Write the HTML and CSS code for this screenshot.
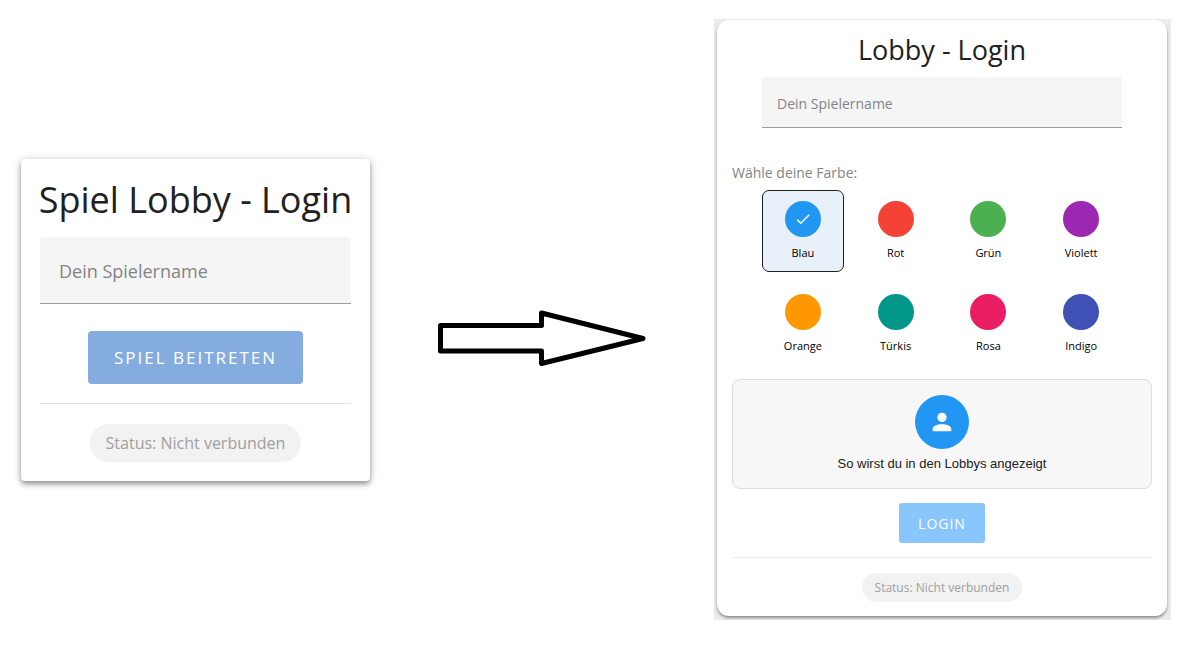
FILE: index.html
```html
<!DOCTYPE html>
<html lang="de">
<head>
    <meta charset="UTF-8">
    <meta name="viewport" content="width=device-width, initial-scale=1.0">
    <title>Lobby - Login</title>
    <link rel="stylesheet" href="styles.css">
</head>
<body>
    <main class="comparison">

        <!-- Old login -->
        <form class="card card-old">
            <h1 class="title">Spiel Lobby - Login</h1>
            <input type="text" class="name-field" placeholder="Dein Spielername" aria-label="Dein Spielername">
            <button type="button" class="btn">SPIEL BEITRETEN</button>
            <div class="status-row">
                <span class="chip">Status: Nicht verbunden</span>
            </div>
        </form>

        <!-- Arrow -->
        <svg class="arrow" viewBox="0 0 208 56" aria-hidden="true">
            <path d="M2.5 15.5H103.5V3L205 28.5L103.5 53.5V41H2.5Z" fill="#fff" stroke="#000" stroke-width="5" stroke-linejoin="round"/>
        </svg>

        <!-- New login -->
        <div class="backdrop">
            <form class="card card-new">
                <h1 class="title">Lobby - Login</h1>
                <input type="text" class="name-field" placeholder="Dein Spielername" aria-label="Dein Spielername">

                <fieldset class="colors">
                    <legend>Wähle deine Farbe:</legend>
                    <div class="color-grid">
                        <label class="color">
                            <input type="radio" name="color" checked>
                            <span class="dot blue">
                                <svg viewBox="0 0 24 24" width="18" height="18" aria-hidden="true"><path d="M21 7L9 19L3.5 13.5L4.91 12.09L9 16.17L19.59 5.59Z" fill="#fff"/></svg>
                            </span>
                            Blau
                        </label>
                        <label class="color"><input type="radio" name="color"><span class="dot red"></span>Rot</label>
                        <label class="color"><input type="radio" name="color"><span class="dot green"></span>Grün</label>
                        <label class="color"><input type="radio" name="color"><span class="dot violet"></span>Violett</label>
                        <label class="color"><input type="radio" name="color"><span class="dot orange"></span>Orange</label>
                        <label class="color"><input type="radio" name="color"><span class="dot teal"></span>Türkis</label>
                        <label class="color"><input type="radio" name="color"><span class="dot pink"></span>Rosa</label>
                        <label class="color"><input type="radio" name="color"><span class="dot indigo"></span>Indigo</label>
                    </div>
                </fieldset>

                <div class="preview">
                    <div class="avatar blue">
                        <svg viewBox="0 0 24 24" width="28" height="28" aria-hidden="true"><path d="M12 4a4 4 0 1 1 0 8a4 4 0 0 1 0-8M12 14c4.42 0 8 1.79 8 4v2H4v-2c0-2.21 3.58-4 8-4" fill="#fff"/></svg>
                    </div>
                    <p>So wirst du in den Lobbys angezeigt</p>
                </div>

                <button type="button" class="btn">LOGIN</button>
                <div class="status-row">
                    <span class="chip">Status: Nicht verbunden</span>
                </div>
            </form>
        </div>

    </main>
</body>
</html>
```
FILE: styles.css
```css
* {
    box-sizing: border-box;
}

body {
    margin: 0;
    background: #fff;
    color: #212121;
    font-family: "Segoe UI", "Open Sans", "Noto Sans", sans-serif;
}

.comparison {
    display: flex;
    justify-content: space-between;
    align-items: center;
    min-height: 100vh;
    padding: 0 19px 6px 21px;
}

/* Cards */
.card {
    display: flex;
    flex-direction: column;
    align-items: center;
    background: #fff;
}

.card-old {
    flex: 0 1 349px;
    min-width: 0;
    padding: 19px;
    border-radius: 4px;
    box-shadow: 0 3px 5px rgba(0, 0, 0, 0.34), 0 1px 10px rgba(0, 0, 0, 0.18);
}

.backdrop {
    flex: 0 1 457px;
    padding: 1px 4px 4px 3px;
    background: #ececec;
}

.card-new {
    padding: 14px 15px;
    border-radius: 12px;
    box-shadow: 0 2px 3px rgba(0, 0, 0, 0.4);
}

.title {
    margin: 0;
    font-weight: 400;
    white-space: nowrap;
}

.card-old .title {
    font-size: 36px;
    line-height: 44px;
    margin-bottom: 15px;
}

.card-new .title {
    font-size: 27px;
    line-height: 32px;
    margin-bottom: 11px;
}

/* Name input */
.name-field {
    width: 100%;
    border: none;
    border-bottom: 1px solid #9e9e9e;
    border-radius: 4px 4px 0 0;
    background: #f5f5f5;
    font-family: inherit;
    color: #212121;
}

.name-field::placeholder {
    color: #848484;
    opacity: 1;
}

.card-old .name-field {
    height: 67px;
    padding: 2px 19px 0;
    font-size: 18px;
    margin-bottom: 27px;
}

.card-new .name-field {
    max-width: 360px;
    height: 51px;
    padding: 2px 15px 0;
    font-size: 14px;
    margin-bottom: 35px;
}

/* Buttons */
.btn {
    border: none;
    color: #fff;
    font-family: inherit;
    white-space: nowrap;
}

.card-old .btn {
    padding: 0 26px;
    height: 53px;
    border-radius: 4px;
    background: #84acde;
    font-size: 17px;
    letter-spacing: 2px;
    margin-bottom: 19px;
}

.card-new .btn {
    padding: 0 19px;
    height: 40px;
    border-radius: 3px;
    background: #89c6fb;
    font-size: 14px;
    letter-spacing: 1px;
    margin-bottom: 14px;
}

/* Connection status */
.status-row {
    display: flex;
    justify-content: center;
    width: 100%;
    border-top: 1px solid #e0e0e0;
}

.chip {
    background: #f2f2f2;
    color: #a0a0a0;
    white-space: nowrap;
}

.card-old .status-row {
    padding-top: 20px;
}

.card-old .chip {
    padding: 0 16px;
    border-radius: 19px;
    font-size: 16px;
    line-height: 38px;
}

.card-new .status-row {
    padding-top: 15px;
    border-color: #ececec;
}

.card-new .chip {
    padding: 0 13px;
    border-radius: 15px;
    font-size: 12px;
    line-height: 29px;
}

/* Color selection */
.colors {
    width: 100%;
    margin: 0 0 14px;
    padding: 0;
    border: none;
}

.colors legend {
    padding: 0;
    margin-bottom: 7px;
    font-size: 14px;
    line-height: 20px;
    color: #848484;
}

.color-grid {
    display: grid;
    grid-template-columns: repeat(4, 1fr);
    gap: 11px;
    max-width: 360px;
    margin: 0 auto;
}

.color {
    display: flex;
    flex-direction: column;
    align-items: center;
    gap: 8px;
    height: 82px;
    padding-top: 10px;
    border: 1px solid transparent;
    border-radius: 7px;
    color: #000;
    font-size: 11px;
    line-height: 16px;
    cursor: pointer;
}

.color input {
    position: absolute;
    opacity: 0;
    margin: 0;
}

.color:has(input:checked) {
    border-color: #212121;
    background: #e8f0fa;
}

.dot {
    display: flex;
    align-items: center;
    justify-content: center;
    width: 36px;
    height: 36px;
    border-radius: 50%;
}

.blue { background: #2196f3; }
.red { background: #f44336; }
.green { background: #4caf50; }
.violet { background: #9c27b0; }
.orange { background: #ff9800; }
.teal { background: #009688; }
.pink { background: #e91e63; }
.indigo { background: #3f51b5; }

/* Avatar preview */
.preview {
    display: flex;
    flex-direction: column;
    align-items: center;
    width: 100%;
    padding: 15px 15px 16px;
    margin-bottom: 14px;
    border: 1px solid #dedede;
    border-radius: 8px;
    background: #f7f7f7;
}

.avatar {
    display: flex;
    align-items: center;
    justify-content: center;
    width: 54px;
    height: 54px;
    border-radius: 50%;
}

.preview p {
    margin: 7px 0 0;
    font-family: Arial, "Liberation Sans", sans-serif;
    font-size: 13px;
    line-height: 16px;
}

/* Arrow between the two cards */
.arrow {
    flex: 0 1 208px;
    margin-top: 36px;
}
```
